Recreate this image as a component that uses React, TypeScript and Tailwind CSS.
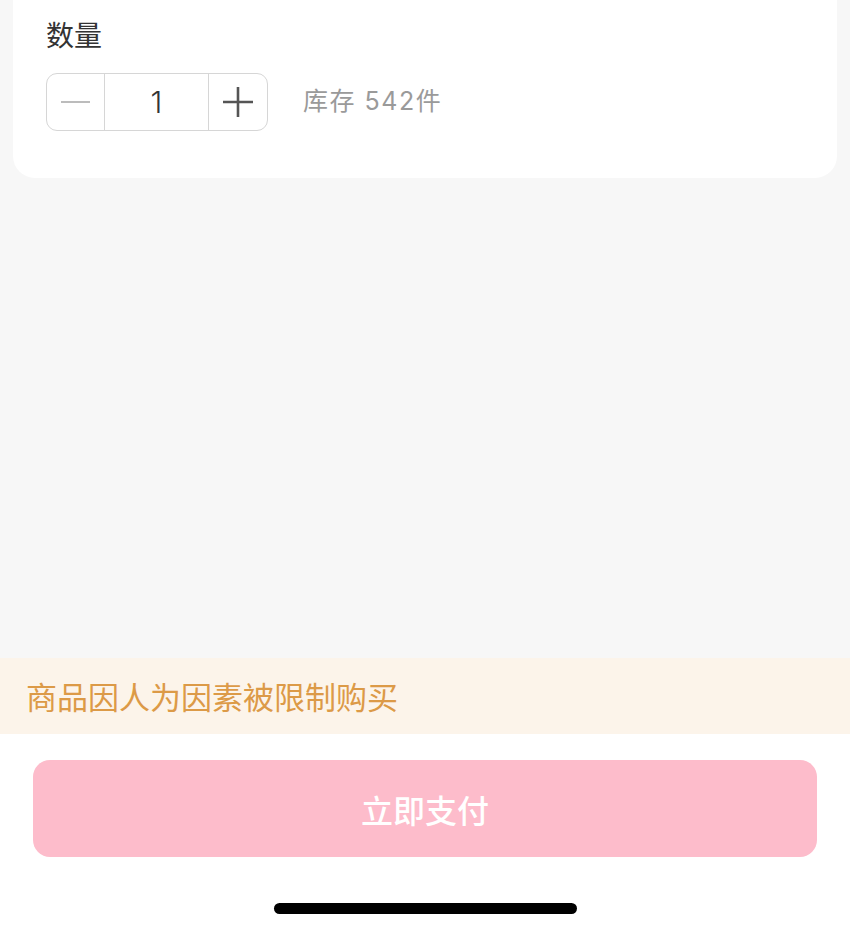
export default function App() {
  const font = { fontFamily: '"Noto Sans CJK SC", "Noto Sans", sans-serif' };
  const numFont = { fontFamily: 'Inter, "Noto Sans CJK SC", sans-serif' };
  return (
    <div className="w-[850px] h-[932px] bg-[#f7f7f7] flex flex-col overflow-hidden" style={font}>
      <div className="mx-[13px] mt-[-30px] bg-white rounded-b-[22px] rounded-t-[22px] pt-[45px] pb-[47px] pl-[33px]">
        <div className="text-[28px] leading-[38px] text-[#333]">数量</div>
        <div className="flex items-center mt-[20px]">
          <div className="flex h-[58px] w-[222px] border border-[#d6d6d6] rounded-[11px] overflow-hidden">
            <div className="w-[58px] flex items-center justify-center border-r border-[#d6d6d6]">
              <div className="w-[29px] h-[2px] bg-[#bcbcbc]" />
            </div>
            <div className="w-[104px] flex items-center justify-center border-r border-[#d6d6d6] text-[30px] font-light text-[#333]" style={numFont}>1</div>
            <div className="flex-1 flex items-center justify-center">
              <svg width="32" height="32" viewBox="0 0 32 32">
                <path d="M16 1v30M1 16h30" stroke="#555" strokeWidth="2.6" />
              </svg>
            </div>
          </div>
          <div className="ml-[35px] text-[25px] text-[#9a9a9a] tracking-[1.5px]" style={numFont}>库存 542件</div>
        </div>
      </div>
      <div className="flex-1" />
      <div className="h-[76px] bg-[#fcf4ea] flex items-center pl-[26px] text-[31px] text-[#dc9a47]">
        商品因人为因素被限制购买
      </div>
      <div className="h-[198px] bg-white flex flex-col items-center">
        <div className="mt-[26px] w-[784px] h-[97px] rounded-[17px] bg-[#fdbccb] flex items-center justify-center text-white text-[32px] font-medium">
          立即支付
        </div>
        <div className="mt-[46px] w-[303px] h-[11px] rounded-full bg-black" />
      </div>
    </div>
  );
}
